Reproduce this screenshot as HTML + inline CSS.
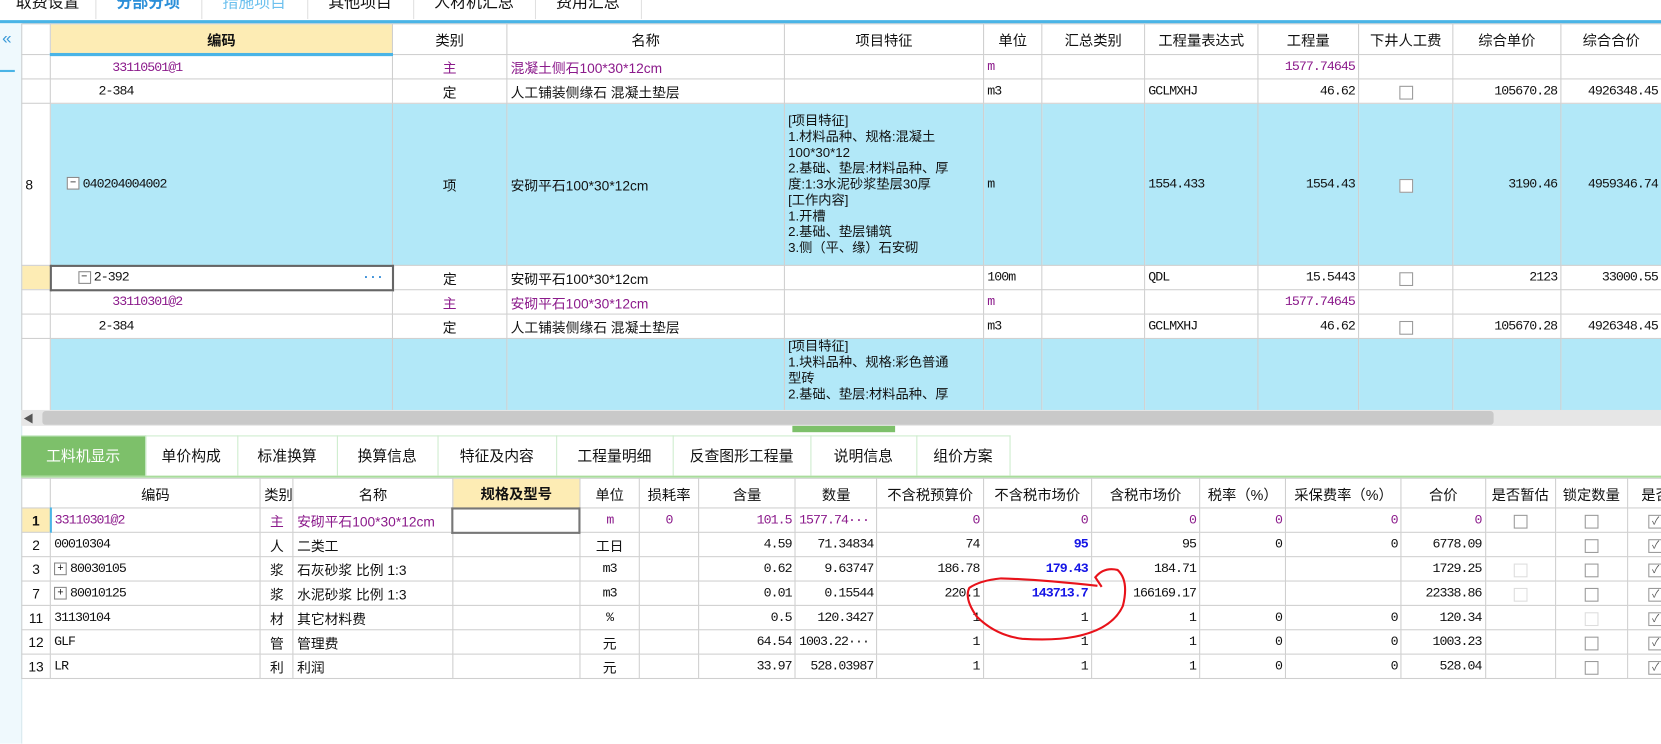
<!DOCTYPE html>
<html><head><meta charset="utf-8"><style>
html,body{margin:0;padding:0;width:1661px;height:742px;overflow:hidden;background:#fff}
#w{position:absolute;left:0;top:0;width:1568px;height:701px;transform:scale(1.05931);transform-origin:0 0;font-family:"Liberation Sans","Noto Sans CJK SC",sans-serif;font-size:13px;color:#111}
.a{position:absolute}
table{border-collapse:collapse;table-layout:fixed;position:absolute}
td{border:1px solid #cfcfcf;padding:0 3px;white-space:nowrap;overflow:hidden;font-size:13px}
.c{text-align:center}.r{text-align:right}
.p{color:#8b1a8b}.b{color:#1515e6;font-weight:bold}
.bl td{background:#b2e8f8}
.h td{text-align:center;font-size:13.5px;background:#fff}
.cb{display:inline-block;width:11px;height:11px;border:1px solid #999;background:#fff;vertical-align:middle}
.cbl{border-color:#ddd}
.ck{display:inline-block;width:11px;height:11px;border:1px solid #999;font-size:10px;line-height:11px;color:#555;text-align:center}
.tab{position:absolute;top:411px;height:37px;line-height:37px;text-align:center;font-size:14px;border-right:1px solid #cdeccd;border-top:1px solid #cdeccd}
.tt{position:absolute;top:0;height:18px;text-align:center;font-size:15px;border-right:1px solid #e0e0e0;overflow:hidden}
.tt span{position:relative;top:-9px}
.pm{display:inline-block;width:10px;height:10px;border:1px solid #888;font-size:10px;line-height:9px;text-align:center;vertical-align:middle;margin-right:3px;background:#fff;font-family:"Liberation Sans",sans-serif;letter-spacing:0}
.mono{font-family:"Liberation Mono","Noto Sans CJK SC",monospace;font-size:12.5px;letter-spacing:-0.9px}
</style></head><body><div id="w">
<div class="tt" style="left:0;width:90px"><span>取费设置</span></div>
<div class="tt" style="left:90px;width:100px;color:#2b8fd9;font-weight:bold"><span>分部分项</span></div>
<div class="tt" style="left:190px;width:100px;color:#6cc0ee"><span>措施项目</span></div>
<div class="tt" style="left:290px;width:100px"><span>其他项目</span></div>
<div class="tt" style="left:390px;width:115px"><span>人材机汇总</span></div>
<div class="tt" style="left:505px;width:100px"><span>费用汇总</span></div>
<div class="a" style="left:0;top:19px;width:1568px;height:3px;background:#4ab4e6"></div>
<div class="a" style="left:0;top:22px;width:20px;height:680px;background:#eff9fd;border-right:1px solid #d8e8ee"></div>
<div class="a" style="left:2px;top:28px;color:#3a9ad8;font-size:16px">«</div>
<div class="a" style="left:0;top:66px;width:14px;height:2px;background:#4ab4e6"></div>

<div class="a" style="left:20px;top:22px;width:1548px;height:365px;overflow:hidden">
<table style="left:0;top:0;width:1548px">
<colgroup><col style="width:27px"><col style="width:323px"><col style="width:108px"><col style="width:262px"><col style="width:188px"><col style="width:55px"><col style="width:97px"><col style="width:107px"><col style="width:95px"><col style="width:89px"><col style="width:102px"><col style="width:95px"></colgroup>
<tr class="h" style="height:29px"><td></td><td style="background:#fdecb4;font-weight:bold;border-bottom:3px solid #4ab4e6">编码</td><td>类别</td><td>名称</td><td>项目特征</td><td>单位</td><td>汇总类别</td><td>工程量表达式</td><td>工程量</td><td>下井人工费</td><td>综合单价</td><td>综合合价</td></tr>
<tr style="height:23px"><td></td><td class="p mono" style="padding-left:58px">33110501@1</td><td class="c p">主</td><td class="p">混凝土侧石100*30*12cm</td><td></td><td class="p mono">m</td><td></td><td></td><td class="r p mono">1577.74645</td><td></td><td></td><td></td></tr>
<tr style="height:23px"><td></td><td class="mono" style="padding-left:45px">2-384</td><td class="c">定</td><td>人工铺装侧缘石 混凝土垫层</td><td></td><td class="mono">m3</td><td></td><td class="mono">GCLMXHJ</td><td class="r mono">46.62</td><td class="c"><span class="cb"></span></td><td class="r mono">105670.28</td><td class="r mono">4926348.45</td></tr>
<tr class="bl" style="height:153px"><td style="background:#fff">8</td><td class="mono" style="padding-left:15px"><span class="pm">−</span>040204004002</td><td class="c">项</td><td>安砌平石100*30*12cm</td><td style="white-space:normal;line-height:15px;font-size:12.5px">[项目特征]<br>1.材料品种、规格:混凝土<br>100*30*12<br>2.基础、垫层:材料品种、厚<br>度:1:3水泥砂浆垫层30厚<br>[工作内容]<br>1.开槽<br>2.基础、垫层铺筑<br>3.侧（平、缘）石安砌</td><td class="mono">m</td><td></td><td class="mono">1554.433</td><td class="r mono">1554.43</td><td class="c"><span class="cb"></span></td><td class="r mono">3190.46</td><td class="r mono">4959346.74</td></tr>
<tr style="height:23px"><td style="background:#fdecb4"></td><td class="mono" style="padding-left:25px;border:2px solid #666;position:relative"><span class="pm">−</span>2-392<span style="position:absolute;right:8px;color:#3a8fd8;font-weight:bold">···</span></td><td class="c">定</td><td>安砌平石100*30*12cm</td><td></td><td class="mono">100m</td><td></td><td class="mono">QDL</td><td class="r mono">15.5443</td><td class="c"><span class="cb"></span></td><td class="r mono">2123</td><td class="r mono">33000.55</td></tr>
<tr style="height:23px"><td></td><td class="p mono" style="padding-left:58px">33110301@2</td><td class="c p">主</td><td class="p">安砌平石100*30*12cm</td><td></td><td class="p mono">m</td><td></td><td></td><td class="r p mono">1577.74645</td><td></td><td></td><td></td></tr>
<tr style="height:23px"><td></td><td class="mono" style="padding-left:45px">2-384</td><td class="c">定</td><td>人工铺装侧缘石 混凝土垫层</td><td></td><td class="mono">m3</td><td></td><td class="mono">GCLMXHJ</td><td class="r mono">46.62</td><td class="c"><span class="cb"></span></td><td class="r mono">105670.28</td><td class="r mono">4926348.45</td></tr>
<tr class="bl" style="height:100px"><td style="background:#fff"></td><td></td><td class="c"></td><td></td><td style="white-space:normal;line-height:15px;font-size:12.5px;vertical-align:top">[项目特征]<br>1.块料品种、规格:彩色普通<br>型砖<br>2.基础、垫层:材料品种、厚</td><td></td><td></td><td></td><td></td><td></td><td></td><td></td></tr>
</table></div>
<div class="a" style="left:20px;top:387px;width:1548px;height:15px;background:#e6e6e6"></div>
<div class="a" style="left:40px;top:388px;width:1370px;height:13px;background:#c9c9c9;border-radius:3px"></div>
<div class="a" style="left:22px;top:387px;font-size:10px;color:#555">◀</div>
<div class="a" style="left:748px;top:402px;width:97px;height:6px;background:#7dc06a"></div>
<div class="a" style="left:20px;top:449px;width:1548px;height:2px;background:#a9dc9c"></div>
<div class="tab" style="left:20px;width:117px;background:#7dc06a;color:#fff">工料机显示</div>
<div class="tab" style="left:137px;width:87px">单价构成</div>
<div class="tab" style="left:224px;width:94px">标准换算</div>
<div class="tab" style="left:318px;width:95px">换算信息</div>
<div class="tab" style="left:413px;width:112px">特征及内容</div>
<div class="tab" style="left:525px;width:110px">工程量明细</div>
<div class="tab" style="left:635px;width:130px">反查图形工程量</div>
<div class="tab" style="left:765px;width:100px">说明信息</div>
<div class="tab" style="left:865px;width:88px">组价方案</div>
<div class="a" style="left:20px;top:451px;width:1548px;height:250px;overflow:hidden">
<table style="left:0;top:0;width:1570px">
<colgroup><col style="width:27px"><col style="width:198px"><col style="width:31px"><col style="width:150px"><col style="width:120px"><col style="width:56px"><col style="width:56px"><col style="width:91px"><col style="width:77px"><col style="width:100px"><col style="width:102px"><col style="width:102px"><col style="width:81px"><col style="width:109px"><col style="width:79px"><col style="width:66px"><col style="width:68px"><col style="width:53px"></colgroup>
<tr class="h" style="height:28px"><td></td><td>编码</td><td>类别</td><td>名称</td><td style="background:#fdecb4;font-weight:bold">规格及型号</td><td>单位</td><td>损耗率</td><td>含量</td><td>数量</td><td>不含税预算价</td><td>不含税市场价</td><td>含税市场价</td><td>税率（%）</td><td>采保费率（%）</td><td>合价</td><td>是否暂估</td><td>锁定数量</td><td>是否</td></tr>
<tr style="height:23px"><td class="c" style="background:#fdecb4;font-weight:bold">1</td><td class="p mono" style="border-left:2px solid #4ab4e6">33110301@2</td><td class="c p">主</td><td class="p">安砌平石100*30*12cm</td><td style="border:2px solid #777"></td><td class="c p mono">m</td><td class="c p mono">0</td><td class="r p mono">101.5</td><td class="p mono">1577.74···</td><td class="r p mono">0</td><td class="r p mono">0</td><td class="r p mono">0</td><td class="r p mono">0</td><td class="r p mono">0</td><td class="r p mono">0</td><td class="c"><span class="cb"></span></td><td class="c"><span class="cb"></span></td><td class="c"><span class="ck">✓</span></td></tr>
<tr style="height:23px"><td class="c">2</td><td class="mono">00010304</td><td class="c">人</td><td>二类工</td><td></td><td class="c">工日</td><td></td><td class="r mono">4.59</td><td class="r mono">71.34834</td><td class="r mono">74</td><td class="r b mono">95</td><td class="r mono">95</td><td class="r mono">0</td><td class="r mono">0</td><td class="r mono">6778.09</td><td></td><td class="c"><span class="cb"></span></td><td class="c"><span class="ck">✓</span></td></tr>
<tr style="height:23px"><td class="c">3</td><td class="mono"><span class="pm">+</span>80030105</td><td class="c">浆</td><td>石灰砂浆 比例 1:3</td><td></td><td class="c mono">m3</td><td></td><td class="r mono">0.62</td><td class="r mono">9.63747</td><td class="r mono">186.78</td><td class="r b mono">179.43</td><td class="r mono">184.71</td><td></td><td></td><td class="r mono">1729.25</td><td class="c"><span class="cb cbl"></span></td><td class="c"><span class="cb"></span></td><td class="c"><span class="ck">✓</span></td></tr>
<tr style="height:23px"><td class="c">7</td><td class="mono"><span class="pm">+</span>80010125</td><td class="c">浆</td><td>水泥砂浆 比例 1:3</td><td></td><td class="c mono">m3</td><td></td><td class="r mono">0.01</td><td class="r mono">0.15544</td><td class="r mono">220.1</td><td class="r b mono">143713.7</td><td class="r mono">166169.17</td><td></td><td></td><td class="r mono">22338.86</td><td class="c"><span class="cb cbl"></span></td><td class="c"><span class="cb"></span></td><td class="c"><span class="ck">✓</span></td></tr>
<tr style="height:23px"><td class="c">11</td><td class="mono">31130104</td><td class="c">材</td><td>其它材料费</td><td></td><td class="c mono">%</td><td></td><td class="r mono">0.5</td><td class="r mono">120.3427</td><td class="r mono">1</td><td class="r mono">1</td><td class="r mono">1</td><td class="r mono">0</td><td class="r mono">0</td><td class="r mono">120.34</td><td></td><td class="c"><span class="cb cbl"></span></td><td class="c"><span class="ck">✓</span></td></tr>
<tr style="height:23px"><td class="c">12</td><td class="mono">GLF</td><td class="c">管</td><td>管理费</td><td></td><td class="c">元</td><td></td><td class="r mono">64.54</td><td class="mono">1003.22···</td><td class="r mono">1</td><td class="r mono">1</td><td class="r mono">1</td><td class="r mono">0</td><td class="r mono">0</td><td class="r mono">1003.23</td><td></td><td class="c"><span class="cb"></span></td><td class="c"><span class="ck">✓</span></td></tr>
<tr style="height:23px"><td class="c">13</td><td class="mono">LR</td><td class="c">利</td><td>利润</td><td></td><td class="c">元</td><td></td><td class="r mono">33.97</td><td class="r mono">528.03987</td><td class="r mono">1</td><td class="r mono">1</td><td class="r mono">1</td><td class="r mono">0</td><td class="r mono">0</td><td class="r mono">528.04</td><td></td><td class="c"><span class="cb"></span></td><td class="c"><span class="ck">✓</span></td></tr>
</table></div>
<svg class="a" style="left:0;top:0" width="1568" height="701"><path d="M1040 554 L1034 545 Q1042 535 1055 538 Q1066 548 1060 572 Q1050 594 1015 601 Q995 605 965 603 Q940 600 922 582 Q910 565 915 555 Q925 548 945 546 Q980 547 1036 553" fill="none" stroke="#e8121a" stroke-width="2"/></svg>
</div></body></html>
